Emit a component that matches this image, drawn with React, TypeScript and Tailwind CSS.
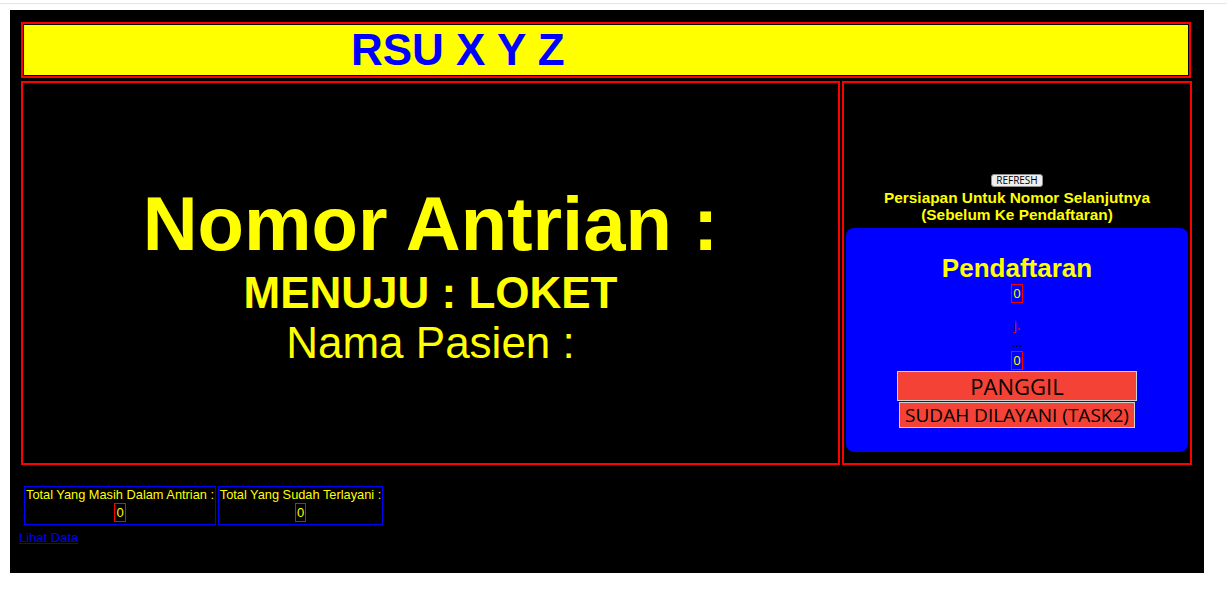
export default function App() {
  return (
    <div className="min-h-screen bg-white font-['Liberation_Sans',Arial,sans-serif]">
      <div className="h-[3px]" />
      <div className="h-px bg-[#e6e6e6]" />
      <div className="ml-[10px] mt-[6px] h-[563px] w-[1194px] bg-black pt-[12px]">
        {/* header */}
        <div className="ml-[11px] h-[56px] w-[1170px] border-2 border-[#ff0000] bg-black p-px">
          <div className="h-full bg-[#ffff00] pl-[327px] text-[44px] font-bold leading-[50px] text-[#0000ff]">
            RSU X Y Z
          </div>
        </div>

        {/* middle row */}
        <div className="ml-[11px] mt-[3px] flex gap-[2px]">
          <div className="h-[384px] w-[819px] border-2 border-[#ff0000] pt-[96px] text-center text-[#ffff00]">
            <div className="text-[76px] font-bold leading-[89px]">Nomor Antrian :</div>
            <div className="text-[44px] font-bold leading-[50px]">MENUJU : LOKET</div>
            <div className="text-[44px] leading-[50px]">Nama Pasien :</div>
          </div>

          <div className="flex h-[384px] w-[350px] flex-col items-center border-2 border-[#ff0000] pt-[91px]">
            <button className="h-[13px] rounded-[3px] border border-[#8f8f8f] bg-[#efefef] px-[4px] font-['Open_Sans',sans-serif] text-[10px] leading-[11px] text-black">
              REFRESH
            </button>
            <div className="mt-[2px] text-center text-[15.4px] font-bold leading-[17px] text-[#ffff00]">
              Persiapan Untuk Nomor Selanjutnya
              <br />
              (Sebelum Ke Pendaftaran)
            </div>
            <div className="mt-[5px] flex h-[224px] w-[342px] flex-col items-center rounded-lg bg-[#0000ff] pt-[25px]">
              <div className="text-[26px] font-bold leading-[30px] text-[#ffff00]">Pendaftaran</div>
              <div className="mt-px border border-[#ff0000] px-px font-['Open_Sans',sans-serif] text-[13px] leading-[17px] text-[#ffff00]">
                0
              </div>
              <div className="mt-[15px] font-['Open_Sans',sans-serif] text-[13px] leading-[15px] text-[#ff0000]">j.</div>
              <div className="mt-[3px] font-['Open_Sans',sans-serif] text-[13px] leading-[13px] text-black">...</div>
              <div className="mt-[2px] border border-[#ff0000] px-px font-['Open_Sans',sans-serif] text-[13px] leading-[17px] text-[#ffff00]">
                0
              </div>
              <button className="mt-px h-[30px] w-[240px] border border-[#d0d0d0] bg-[#f44336] font-['Open_Sans',sans-serif] text-[22px] leading-[28px] text-black">
                PANGGIL
              </button>
              <button className="mt-px h-[26px] border border-[#d0d0d0] bg-[#f44336] px-[5px] font-['Open_Sans',sans-serif] text-[19px] leading-[24px] text-black">
                SUDAH DILAYANI (TASK2)
              </button>
            </div>
          </div>
        </div>

        {/* totals */}
        <div className="ml-[14px] mt-[21px] flex gap-[2px] text-center text-[12.8px] text-[#ffff00]">
          <div className="h-[39px] w-[192px] border border-[#0000ff]">
            <div className="leading-[16px]">Total Yang Masih Dalam Antrian :</div>
            <span className="inline-block border border-[#ff0000] px-px text-[13px] leading-[17px]">0</span>
          </div>
          <div className="h-[39px] w-[165px] border border-[#0000ff]">
            <div className="leading-[16px]">Total Yang Sudah Terlayani :</div>
            <span className="inline-block border border-[#ff0000] px-px text-[13px] leading-[17px]">0</span>
          </div>
        </div>
        <a href="#" className="ml-[9px] mt-[5px] block w-fit text-[13px] leading-[15px] text-[#0000ee] underline">
          Lihat Data
        </a>
      </div>
    </div>
  );
}
